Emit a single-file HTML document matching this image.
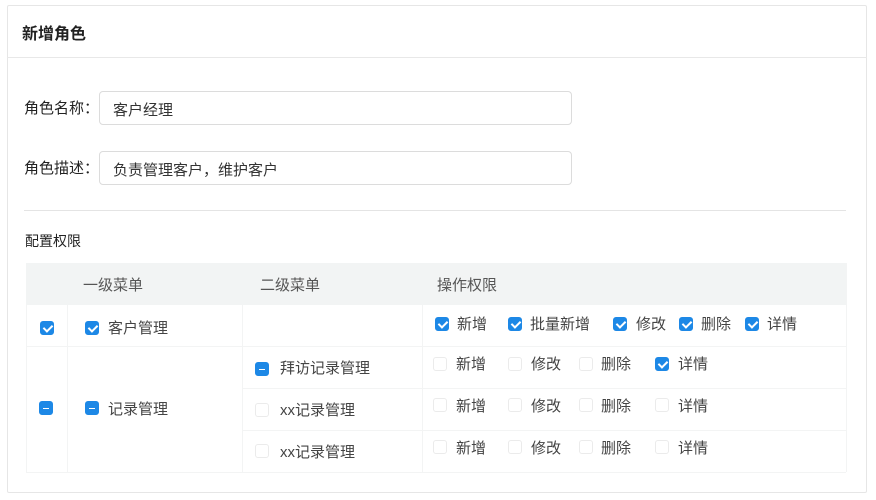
<!DOCTYPE html>
<html><head><meta charset="utf-8"><style>
*{margin:0;padding:0;box-sizing:border-box}
body{width:876px;height:500px;background:#fff;font-family:"Liberation Sans","Noto Sans CJK SC",sans-serif;color:#333;position:relative;overflow:hidden}
.a{position:absolute;white-space:nowrap}
.card{position:absolute;left:7px;top:5px;width:860px;height:488px;border:1px solid #e6e6e6;border-radius:2px}
.hd{position:absolute;left:7px;top:5px;width:860px;height:53px;border-bottom:1px solid #e8e8e8}
.inp{position:absolute;left:99px;width:473px;height:34px;border:1px solid #dcdcdc;border-radius:4px;font-size:15px;padding:7px 13px;color:#333}
.cb{position:absolute;width:14px;height:14px;border-radius:3px;border:1px solid #ebebeb;background:#fff}
.cb.on{background:#1d88e6;border-color:#1d88e6}
.cb.on::after{content:"";position:absolute;left:4px;top:1px;width:4px;height:7px;border:solid #fff;border-width:0 2px 2px 0;transform:rotate(45deg)}
.cb.ind{background:#1d88e6;border-color:#1d88e6}
.cb.ind::after{content:"";position:absolute;left:3px;top:6px;width:6px;height:1px;background:#fff}
.t{font-size:15px;color:#444;margin-top:-1px}
.line{position:absolute;background:#f3f4f4}
</style></head><body>
<div class="card"></div>
<div class="hd"></div>
<div class="a" style="left:22px;top:20px;font-size:16px;color:#222;font-weight:600">新增角色</div>
<div class="a" style="left:24px;top:97px;font-size:15px;color:#222">角色名称：</div>
<div class="inp" style="top:91px">客户经理</div>
<div class="a" style="left:24px;top:157px;font-size:15px;color:#222">角色描述：</div>
<div class="inp" style="top:151px">负责管理客户，维护客户</div>
<div class="line" style="left:24px;top:210px;width:822px;height:1px;background:#e4e4e4"></div>
<div class="a" style="left:25px;top:231px;font-size:14px;color:#222">配置权限</div>
<div class="a" style="left:26px;top:263px;width:820px;height:42px;background:#f2f4f4"></div>
<div class="a t" style="left:83px;top:275px;color:#555">一级菜单</div>
<div class="a t" style="left:260px;top:275px;color:#555">二级菜单</div>
<div class="a t" style="left:437px;top:275px;color:#555">操作权限</div>
<div class="line" style="left:26px;top:346px;width:820px;height:1px"></div>
<div class="line" style="left:242px;top:388px;width:604px;height:1px"></div>
<div class="line" style="left:242px;top:430px;width:604px;height:1px"></div>
<div class="line" style="left:26px;top:472px;width:820px;height:1px"></div>
<div class="line" style="left:26px;top:305px;width:1px;height:167px"></div>
<div class="line" style="left:67px;top:305px;width:1px;height:167px"></div>
<div class="line" style="left:242px;top:305px;width:1px;height:167px"></div>
<div class="line" style="left:422px;top:305px;width:1px;height:167px"></div>
<div class="line" style="left:846px;top:263px;width:1px;height:209px"></div>

<div class="cb on" style="left:40px;top:321px"></div>
<div class="cb on" style="left:85px;top:321px"></div><div class="a t" style="left:108px;top:318px">客户管理</div>
<div class="cb ind" style="left:39px;top:401px"></div>
<div class="cb ind" style="left:85px;top:401px"></div><div class="a t" style="left:108px;top:399px">记录管理</div>
<div class="cb ind" style="left:255px;top:362px"></div><div class="a t" style="left:280px;top:358px">拜访记录管理</div>
<div class="cb" style="left:255px;top:403px"></div><div class="a t" style="left:280px;top:400px">xx记录管理</div>
<div class="cb" style="left:255px;top:444px"></div><div class="a t" style="left:280px;top:442px">xx记录管理</div>

<div class="cb on" style="left:435px;top:317px"></div><div class="a t" style="left:457px;top:314px">新增</div>
<div class="cb on" style="left:508px;top:317px"></div><div class="a t" style="left:530px;top:314px">批量新增</div>
<div class="cb on" style="left:613px;top:317px"></div><div class="a t" style="left:636px;top:314px">修改</div>
<div class="cb on" style="left:679px;top:317px"></div><div class="a t" style="left:701px;top:314px">删除</div>
<div class="cb on" style="left:745px;top:317px"></div><div class="a t" style="left:767px;top:314px">详情</div>

<div class="cb" style="left:433px;top:357px"></div><div class="a t" style="left:456px;top:354px">新增</div>
<div class="cb" style="left:508px;top:357px"></div><div class="a t" style="left:531px;top:354px">修改</div>
<div class="cb" style="left:579px;top:357px"></div><div class="a t" style="left:601px;top:354px">删除</div>
<div class="cb on" style="left:655px;top:357px"></div><div class="a t" style="left:678px;top:354px">详情</div>

<div class="cb" style="left:433px;top:398px"></div><div class="a t" style="left:456px;top:396px">新增</div>
<div class="cb" style="left:508px;top:398px"></div><div class="a t" style="left:531px;top:396px">修改</div>
<div class="cb" style="left:579px;top:398px"></div><div class="a t" style="left:601px;top:396px">删除</div>
<div class="cb" style="left:655px;top:398px"></div><div class="a t" style="left:678px;top:396px">详情</div>

<div class="cb" style="left:433px;top:440px"></div><div class="a t" style="left:456px;top:438px">新增</div>
<div class="cb" style="left:508px;top:440px"></div><div class="a t" style="left:531px;top:438px">修改</div>
<div class="cb" style="left:579px;top:440px"></div><div class="a t" style="left:601px;top:438px">删除</div>
<div class="cb" style="left:655px;top:440px"></div><div class="a t" style="left:678px;top:438px">详情</div>
</body></html>
